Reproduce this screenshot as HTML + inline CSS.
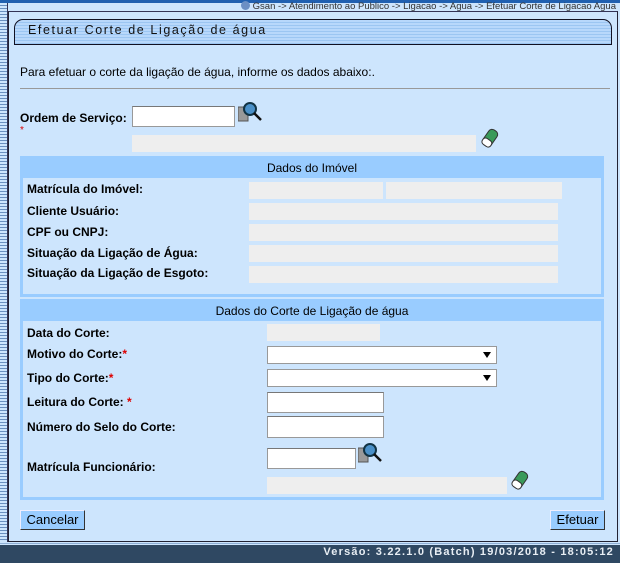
<!DOCTYPE html>
<html><head><meta charset="utf-8">
<style>
*{margin:0;padding:0;box-sizing:border-box}
body{width:620px;height:563px;position:relative;overflow:hidden;background:#cde5fd;font-family:"Liberation Sans",sans-serif;font-size:12px;color:#000}
.a{position:absolute}
.lbl{position:absolute;font-weight:bold;font-size:12px;white-space:nowrap}
.ro{position:absolute;background:#eeeeee;height:17px}
.in{position:absolute;background:#fff;border:1px solid #999;border-top-color:#777}
.sel{position:absolute;background:#fff;border:1px solid #999;height:18px}
.sel:after{content:"";position:absolute;right:5px;top:5px;border-left:4px solid transparent;border-right:4px solid transparent;border-top:6px solid #000}
.sec{position:absolute;border:3px solid #99ccff;left:20px;width:584px}
.sech{position:absolute;left:0;right:0;top:0;height:19px;background:#99ccff;text-align:center;line-height:18px;font-size:12px}
.btn{position:absolute;background:#99ccff;border:1px solid #333;border-top-color:#eef;border-left-color:#eef;height:20px;line-height:18px;text-align:center;font-size:13px}
.star{color:#d00}
</style></head><body>
<div class="a" style="left:0;top:0;width:620px;height:3px;background:#2060b0"></div>
<div class="a" style="left:0;top:3px;width:8px;height:541px;background:repeating-linear-gradient(#cde5fd 0 2px,#6a8fbf 2px 3px);border-right:1px solid #335"></div>
<div class="a" style="right:4px;top:1px;font-size:9.5px;color:#333;white-space:nowrap"><span style="display:inline-block;width:9px;height:9px;border-radius:50%;background:#6b8fc4;vertical-align:-1px;margin-right:3px"></span>Gsan -&gt; Atendimento ao Publico -&gt; Ligacao -&gt; Agua -&gt; Efetuar Corte de Ligacao Agua</div>
<div class="a" style="left:8px;top:11px;width:610px;height:531px;border:1px solid #223;border-top-color:#335"></div>
<div class="a" style="left:14px;top:19px;width:598px;height:26px;border:1px solid #112;border-radius:9px 9px 0 0;background:repeating-linear-gradient(#b8d8fb 0 2px,#9cc6f2 2px 3px)"></div>
<div class="a" style="left:28px;top:23px;font-size:12.5px;letter-spacing:1.6px;color:#111">Efetuar Corte de Ligação de água</div>
<div class="a" style="left:20px;top:65px">Para efetuar o corte da ligação de água, informe os dados abaixo:.</div>
<div class="a" style="left:20px;top:88px;width:590px;height:1px;background:#999"></div>
<div class="lbl" style="left:20px;top:111px">Ordem de Serviço:</div>
<div class="a star" style="left:20px;top:125px;font-size:10px">*</div>
<div class="in" style="left:132px;top:106px;width:103px;height:21px"></div>
<svg class="a" style="left:238px;top:101px" width="26" height="22"><rect x="0" y="6" width="10" height="14" fill="#999" stroke="#555"/><circle cx="12" cy="8" r="6" fill="#4a90c8" stroke="#134" stroke-width="2"/><line x1="16" y1="12" x2="23" y2="19" stroke="#111" stroke-width="2.5"/></svg>
<div class="ro" style="left:132px;top:135px;width:344px"></div>
<svg class="a" style="left:480px;top:128px" width="20" height="20"><g transform="rotate(35 10 10)"><rect x="5" y="1" width="10" height="18" rx="4" fill="#3a9a5a" stroke="#333"/><rect x="5" y="12" width="10" height="7" rx="3" fill="#fff" stroke="#333"/></g></svg>

<div class="sec" style="top:156px;height:141px"><div class="sech">Dados do Imóvel</div></div>
<div class="lbl" style="left:27px;top:182px">Matrícula do Imóvel:</div>
<div class="ro" style="left:249px;top:182px;width:134px"></div>
<div class="ro" style="left:386px;top:182px;width:176px"></div>
<div class="lbl" style="left:27px;top:204px">Cliente Usuário:</div>
<div class="ro" style="left:249px;top:203px;width:309px"></div>
<div class="lbl" style="left:27px;top:225px">CPF ou CNPJ:</div>
<div class="ro" style="left:249px;top:224px;width:309px"></div>
<div class="lbl" style="left:27px;top:246px">Situação da Ligação de Água:</div>
<div class="ro" style="left:249px;top:245px;width:309px"></div>
<div class="lbl" style="left:27px;top:266px">Situação da Ligação de Esgoto:</div>
<div class="ro" style="left:249px;top:266px;width:309px"></div>

<div class="sec" style="top:299px;height:201px"><div class="sech">Dados do Corte de Ligação de água</div></div>
<div class="lbl" style="left:27px;top:326px">Data do Corte:</div>
<div class="ro" style="left:267px;top:324px;width:113px"></div>
<div class="lbl" style="left:27px;top:347px">Motivo do Corte:<span class="star">*</span></div>
<div class="sel" style="left:267px;top:346px;width:230px"></div>
<div class="lbl" style="left:27px;top:371px">Tipo do Corte:<span class="star">*</span></div>
<div class="sel" style="left:267px;top:369px;width:230px"></div>
<div class="lbl" style="left:27px;top:395px">Leitura do Corte: <span class="star">*</span></div>
<div class="in" style="left:267px;top:392px;width:117px;height:21px"></div>
<div class="lbl" style="left:27px;top:420px">Número do Selo do Corte:</div>
<div class="in" style="left:267px;top:416px;width:117px;height:22px"></div>
<div class="lbl" style="left:27px;top:460px">Matrícula Funcionário:</div>
<div class="in" style="left:267px;top:448px;width:89px;height:21px"></div>
<svg class="a" style="left:358px;top:442px" width="26" height="22"><rect x="0" y="6" width="10" height="14" fill="#999" stroke="#555"/><circle cx="12" cy="8" r="6" fill="#4a90c8" stroke="#134" stroke-width="2"/><line x1="16" y1="12" x2="23" y2="19" stroke="#111" stroke-width="2.5"/></svg>
<div class="ro" style="left:267px;top:477px;width:240px"></div>
<svg class="a" style="left:510px;top:470px" width="20" height="20"><g transform="rotate(35 10 10)"><rect x="5" y="1" width="10" height="18" rx="4" fill="#3a9a5a" stroke="#333"/><rect x="5" y="12" width="10" height="7" rx="3" fill="#fff" stroke="#333"/></g></svg>

<div class="btn" style="left:20px;top:510px;width:65px">Cancelar</div>
<div class="btn" style="left:550px;top:510px;width:55px">Efetuar</div>

<div class="a" style="left:0;top:542px;width:620px;height:3px;background:repeating-linear-gradient(#cde5fd 0 1px,#8fb0d6 1px 2px)"></div>
<div class="a" style="left:0;top:545px;width:620px;height:18px;background:#2f4862"></div>
<div class="a" style="right:6px;top:546px;color:#e8eef4;font-weight:bold;font-size:11px;letter-spacing:1.2px;white-space:nowrap">Versão: 3.22.1.0 (Batch) 19/03/2018 - 18:05:12</div>
</body></html>
